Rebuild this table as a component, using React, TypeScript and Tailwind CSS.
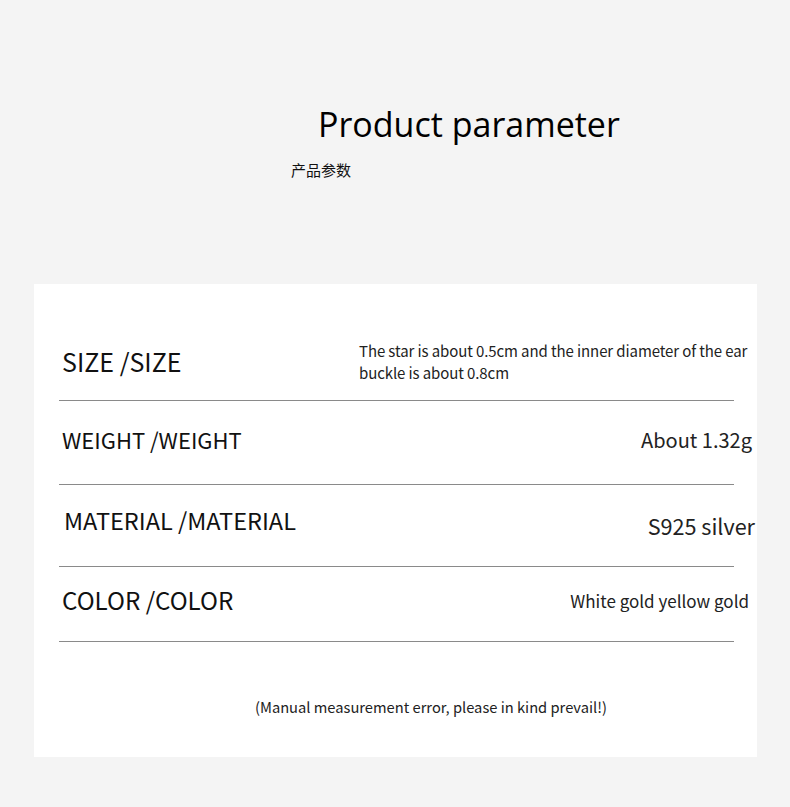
const rows = [
  {
    label: "SIZE /SIZE",
    value: "The star is about 0.5cm and the inner diameter of the ear buckle is about 0.8cm",
  },
];

function Divider({ className = "" }: { className?: string }) {
  return <div className={`ml-[25px] h-px w-[675px] bg-[#8a8a8a] ${className}`} />;
}

export default function App() {
  return (
    <div
      className="h-[807px] w-[790px] overflow-hidden bg-[#f4f4f4] text-[#111]"
      style={{ fontFamily: '"Noto Sans CJK SC", "Noto Sans", sans-serif' }}
    >
      <header className="pt-[100px]">
        <h1
          className="ml-[318px] text-[34px] leading-[48px] text-black"
          style={{ fontFamily: '"Open Sans", "Noto Sans", sans-serif' }}
        >
          Product parameter
        </h1>
        <p className="ml-[291px] mt-[11px] text-[15px] leading-[22px]">产品参数</p>
      </header>

      <section className="ml-[34px] mt-[103px] h-[473px] w-[723px] bg-white pt-[55px]">
        <div className="flex h-[46px] items-center justify-between">
          <span className="ml-[28px] text-[25px]">{rows[0].label}</span>
          <p className="mr-[3px] w-[395px] text-[15px] leading-[22px] tracking-[-0.1px] text-[#222]">
            {rows[0].value}
          </p>
        </div>
        <Divider className="mt-[15px]" />

        <div className="flex h-[77px] items-center justify-between">
          <span className="ml-[28px] text-[22px]">WEIGHT /WEIGHT</span>
          <span className="mr-[5px] text-[20px] text-[#222]">About 1.32g</span>
        </div>
        <Divider className="mt-[6px]" />

        <div className="flex h-[71px] items-center justify-between">
          <span className="ml-[30px] text-[23.5px]">MATERIAL /MATERIAL</span>
          <span className="mr-[2px] mt-[12px] text-[21.6px] text-[#222]">S925 silver</span>
        </div>
        <Divider className="mt-[10px]" />

        <div className="flex h-[67px] items-center justify-between">
          <span className="ml-[28px] text-[24.2px]">COLOR /COLOR</span>
          <span className="mr-[8px] text-[17px] text-[#222]">White gold yellow gold</span>
        </div>
        <Divider className="mt-[7px]" />

        <p className="ml-[221px] mt-[54px] text-[14.7px] leading-[22px] text-[#222]">
          (Manual measurement error, please in kind prevail!)
        </p>
      </section>
    </div>
  );
}
